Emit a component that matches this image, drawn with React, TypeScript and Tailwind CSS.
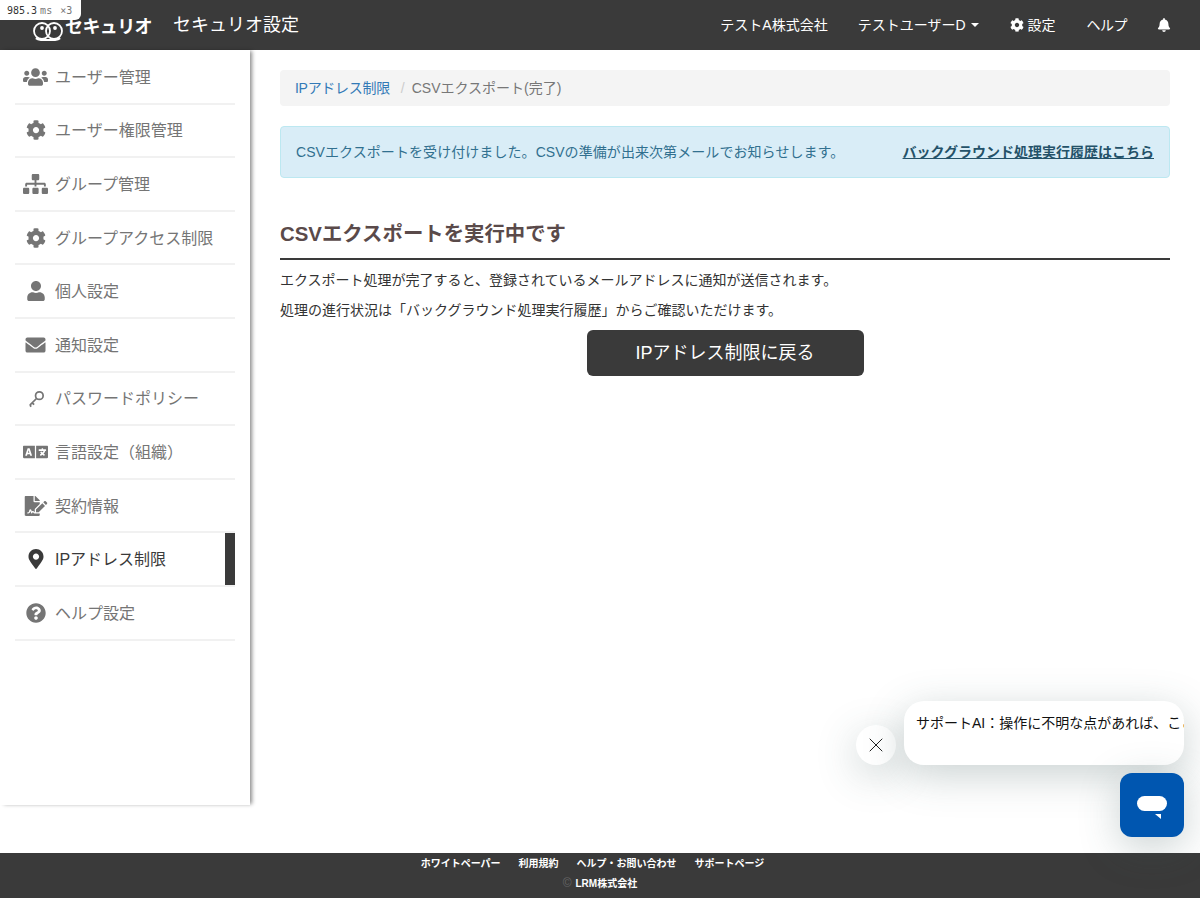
import React from 'react';
import {
  FaUsers, FaCog, FaSitemap, FaUser, FaEnvelope, FaMapMarkerAlt, FaQuestionCircle, FaBell, FaFileSignature, FaLanguage,
} from 'react-icons/fa';
import { X } from 'lucide-react';

const KeyIcon = ({ className }: { className?: string }) => (
  <svg viewBox="0 0 20 20" className={className} fill="none" stroke="currentColor" strokeWidth="1.8">
    <circle cx="13" cy="7" r="4" />
    <path d="M10 10 3 17M5.5 14.5l2 2M3 17l1.5 1.5" />
  </svg>
);

const menu = [
  { label: 'ユーザー管理', icon: <FaUsers className="w-[25px] h-[20px]" /> },
  { label: 'ユーザー権限管理', icon: <FaCog className="w-[20px] h-[20px]" /> },
  { label: 'グループ管理', icon: <FaSitemap className="w-[25px] h-[20px]" /> },
  { label: 'グループアクセス制限', icon: <FaCog className="w-[20px] h-[20px]" /> },
  { label: '個人設定', icon: <FaUser className="w-[18px] h-[20px]" /> },
  { label: '通知設定', icon: <FaEnvelope className="w-[21px] h-[20px]" /> },
  { label: 'パスワードポリシー', icon: <KeyIcon className="w-[19px] h-[19px] ml-[1px]" /> },
  { label: '言語設定（組織）', icon: <FaLanguage className="w-[25px] h-[20px]" /> },
  { label: '契約情報', icon: <FaFileSignature className="w-[24px] h-[20px]" /> },
  { label: 'IPアドレス制限', icon: <FaMapMarkerAlt className="w-[16px] h-[20px]" />, active: true },
  { label: 'ヘルプ設定', icon: <FaQuestionCircle className="w-[20px] h-[20px]" /> },
];

const Logo = () => (
  <div className="flex items-center gap-[2px]">
    <svg viewBox="0 0 30 22" className="mt-[10px] h-[22px] w-[30px]" fill="none" stroke="white" strokeWidth="1.8">
      <circle cx="9" cy="12" r="8" />
      <circle cx="21" cy="12" r="8" />
      <circle cx="9" cy="9" r="1" fill="white" />
      <circle cx="22" cy="9" r="1" fill="white" />
      <path d="M3 19c4 3 20 3 24 0" strokeWidth="2.5" />
    </svg>
    <span className="mt-[4px] text-[18px] leading-none font-bold tracking-[-0.6px] text-white">セキュリオ</span>
  </div>
);

export default function App() {
  return (
    <div className="relative flex h-[898px] flex-col overflow-hidden bg-white font-['Liberation_Sans','Noto_Sans_CJK_JP',sans-serif]">
      <header className="flex h-[50px] shrink-0 items-center bg-[#3a3a3a] pr-[29px] pl-[33px] text-white">
        <Logo />
        <span className="mt-[1px] ml-[21px] text-[18px]">セキュリオ設定</span>
        <nav className="ml-auto flex items-center text-[14px]">
          <span>テストA株式会社</span>
          <span className="ml-[30px] flex items-center gap-[5px]">
            テストユーザーD
            <span className="h-0 w-0 border-x-[4px] border-t-[4px] border-x-transparent border-t-white" />
          </span>
          <span className="ml-[31px] flex items-center gap-[4px]"><FaCog className="h-[14px] w-[14px]" />設定</span>
          <span className="ml-[31px] tracking-[-0.5px]">ヘルプ</span>
          <FaBell className="ml-[30px] h-[14px] w-[14px]" />
        </nav>
      </header>

      <div className="flex min-h-0 flex-1">
        <aside className="h-[755px] w-[250px] shrink-0 px-[15px] pt-[1px] shadow-[3px_0_4px_-1px_rgba(0,0,0,0.45)]">
          {menu.map((m) => (
            <div
              key={m.label}
              className={`relative flex h-[53.6px] items-center border-b-2 border-[#f1f1f1] text-[16px] ${m.active ? 'text-[#3a3a3a]' : 'text-[#757575]'}`}
            >
              <span className="flex w-[40px] shrink-0 justify-center pl-[1px]">{m.icon}</span>
              <span className="mt-[2px]">{m.label}</span>
              {m.active && <span className="absolute top-0 right-0 h-[52px] w-[10px] bg-[#3a3a3a]" />}
            </div>
          ))}
        </aside>

        <main className="flex-1 px-[30px] pt-[20px]">
          <div className="flex h-[36px] items-center rounded-[4px] bg-[#f4f4f4] px-[15px] text-[14px]">
            <span className="tracking-[-0.3px] text-[#337ab7]">IPアドレス制限</span>
            <span className="mr-[7px] ml-[11px] text-[#ccc]">/</span>
            <span className="text-[#777]">CSVエクスポート(完了)</span>
          </div>

          <div className="mt-[20px] flex h-[52px] items-center justify-between rounded-[4px] border border-[#bce8f1] bg-[#d9edf7] px-[15px] pt-[1px] text-[14px] text-[#31708f]">
            <span className="tracking-[0.07px]">CSVエクスポートを受け付けました。CSVの準備が出来次第メールでお知らせします。</span>
            <span className="font-bold text-[#245269] underline">バックグラウンド処理実行履歴はこちら</span>
          </div>

          <h2 className="mt-[41px] border-b-2 border-[#3a3a3a] pb-[9px] text-[20.4px] leading-[30px] font-bold text-[#5a4a4a]">
            CSVエクスポートを実行中です
          </h2>
          <p className="mt-[10px] text-[14px] leading-[20px] text-[#333]">エクスポート処理が完了すると、登録されているメールアドレスに通知が送信されます。</p>
          <p className="mt-[10px] text-[14px] leading-[20px] text-[#333]">処理の進行状況は「バックグラウンド処理実行履歴」からご確認いただけます。</p>
          <div className="mt-[10px] flex justify-center">
            <button className="h-[46px] w-[277px] rounded-[6px] bg-[#3a3a3a] pt-[1px] text-[18px] text-white">IPアドレス制限に戻る</button>
          </div>
        </main>
      </div>

      <footer className="h-[45px] shrink-0 bg-[#3a3a3a] pt-[2px] text-center text-[10px] font-bold text-white">
        <div className="flex justify-center gap-[18px] pt-[1px] pr-[15px] leading-[16px]">
          <span>ホワイトペーパー</span>
          <span>利用規約</span>
          <span>ヘルプ・お問い合わせ</span>
          <span>サポートページ</span>
        </div>
        <div className="mt-[3px] leading-[16px]"><span className="mr-[1px] text-[12px] font-normal text-[#666]">©</span> LRM株式会社</div>
      </footer>

      <div className="absolute top-0 left-0 flex h-[20px] w-[81px] items-center rounded-br-[6px] bg-white pl-[7px] font-['DejaVu_Sans_Mono',monospace] text-[10px] text-[#333]">
        985.3<span className="ml-[3px] text-[#777]">ms</span><span className="ml-[8px] text-[#777]">×3</span>
      </div>

      <button className="absolute top-[725px] left-[856px] flex h-[40px] w-[40px] items-center justify-center rounded-full bg-white shadow-[0_10px_40px_rgba(60,90,90,0.28)]">
        <X className="h-[24px] w-[24px] text-[#222]" strokeWidth={1} />
      </button>
      <div className="absolute top-[701px] left-[904px] h-[64px] w-[280px] overflow-hidden rounded-[20px] bg-white pt-[12px] pl-[12px] text-[14px] leading-[20px] whitespace-nowrap text-[#111] shadow-[0_10px_40px_rgba(60,90,90,0.28)]">
        サポートAI：操作に不明な点があれば、ここからお気軽にご質問ください
      </div>
      <button className="absolute top-[773px] left-[1120px] flex h-[64px] w-[64px] items-center justify-center rounded-[12px] bg-[#0056b0] shadow-[0_10px_40px_rgba(60,90,90,0.28)]">
        <svg viewBox="0 0 30 23" className="mt-[5px] h-[23px] w-[30px]" fill="white">
          <rect x="0" y="0" width="30" height="15" rx="7.5" />
          <path d="M18 18h6v5z" />
        </svg>
      </button>
    </div>
  );
}
